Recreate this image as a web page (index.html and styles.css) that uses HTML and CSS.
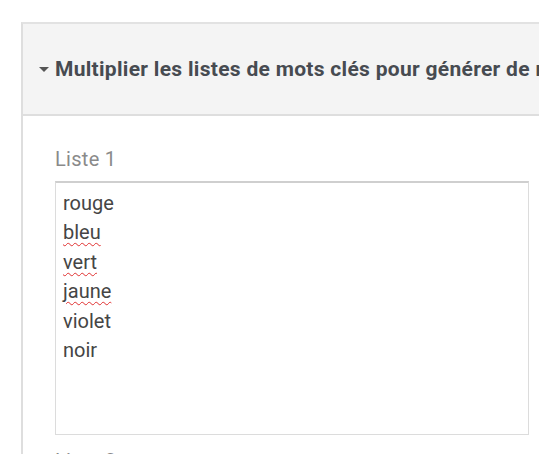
FILE: index.html
```html
<!DOCTYPE html>
<html lang="fr">
<head>
<meta charset="utf-8">
<title>Multiplier les listes</title>
<link rel="stylesheet" href="styles.css">
</head>
<body>
  <section class="panel">
    <header class="panel-head">
      <span class="caret"></span>
      <h2 class="panel-title">Multiplier les listes de mots clés pour générer de multiples combinaisons</h2>
    </header>
    <div class="panel-body">
      <div class="field">
        <label class="field-label">Liste 1</label>
        <div class="textbox">
          <div class="line">rouge</div>
          <div class="line"><span class="spell">bleu</span></div>
          <div class="line"><span class="spell">vert</span></div>
          <div class="line"><span class="spell">jaune</span></div>
          <div class="line">violet</div>
          <div class="line">noir</div>
        </div>
      </div>
      <div class="field">
        <label class="field-label">Liste 2</label>
      </div>
    </div>
  </section>
</body>
</html>
```
FILE: styles.css
```css
html, body {
  margin: 0;
  padding: 0;
  background: #ffffff;
  overflow: hidden;
  height: 454px;
}
body {
  font-family: Roboto, "Liberation Sans", Arial, sans-serif;
  padding: 22px 0 0 21px;
}
.panel {
  width: 900px;
  border-left: 2px solid #dedede;
  border-top: 2px solid #e2e2e2;
}
.panel-head {
  display: flex;
  align-items: center;
  height: 90px;
  background: #f4f4f4;
  border-bottom: 2px solid #dedede;
  padding-left: 16px;
  gap: 6px;
}
.caret {
  width: 0;
  height: 0;
  border-left: 5px solid transparent;
  border-right: 5px solid transparent;
  border-top: 5px solid #555555;
  margin-top: 1px;
}
.panel-title {
  margin: 0;
  font-size: 21px;
  font-weight: 700;
  color: #474b51;
  white-space: nowrap;
  letter-spacing: 0.3px;
}
.panel-body {
  padding: 31px 0 0 32px;
}
.field-label {
  display: block;
  font-size: 20px;
  line-height: 24px;
  color: #8a8a8a;
  margin-bottom: 10px;
  letter-spacing: 0.3px;
}
.textbox {
  box-sizing: border-box;
  width: 474px;
  height: 254px;
  border: 1px solid #dcdcdc;
  border-top: 2px solid #cfcfcf;
  padding: 6px 7px;
  margin-bottom: 14px;
  font-size: 20px;
  line-height: 29.4px;
  color: #454545;
}
.spell {
  text-decoration: underline wavy #e03030;
  text-decoration-thickness: 1px;
  text-underline-offset: 3px;
}
```
